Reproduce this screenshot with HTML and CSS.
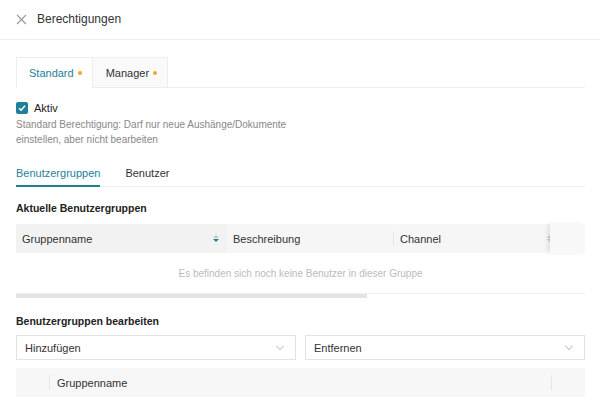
FILE: index.html
```html
<!DOCTYPE html>
<html lang="de">
<head>
  <meta charset="UTF-8">
  <title>Berechtigungen</title>
  <link rel="stylesheet" href="styles.css">
</head>
<body>

  <!-- Kopfzeile -->
  <header class="topbar">
    <button class="close-btn" aria-label="Schließen">
      <svg width="11" height="11" viewBox="0 0 11 11"><path d="M1 1L10 10M10 1L1 10" stroke="#9a9a9a" stroke-width="1.2" fill="none"/></svg>
    </button>
    <span class="topbar-title">Berechtigungen</span>
  </header>

  <main class="content">
    <div class="role-tabs">
      <div class="role-tab active">Standard<span class="dot"></span></div>
      <div class="role-tab">Manager<span class="dot"></span></div>
    </div>

    <label class="check-row">
      <span class="checkbox">
        <svg width="8" height="8" viewBox="0 0 8 8"><path d="M1 4.2L3.1 6.2L7 1.8" stroke="#fff" stroke-width="1.5" fill="none"/></svg>
      </span>
      Aktiv
    </label>
    <p class="description">Standard Berechtigung: Darf nur neue Aushänge/Dokumente<br>einstellen, aber nicht bearbeiten</p>

    <div class="sub-tabs">
      <div class="sub-tab active">Benutzergruppen</div>
      <div class="sub-tab">Benutzer</div>
    </div>

    <h4 class="section-title">Aktuelle Benutzergruppen</h4>
    <div class="table">
      <div class="table-head">
        <div class="th th-name sorted">
          Gruppenname
          <span class="sorter"><i class="up"></i><i class="down"></i></span>
        </div>
        <div class="th th-desc">Beschreibung</div>
        <div class="th th-channel">Channel<span class="sorter grey"><i class="up"></i><i class="down"></i></span></div>
        <div class="th th-fixed"></div>
      </div>
      <div class="table-empty">Es befinden sich noch keine Benutzer in dieser Gruppe</div>
      <div class="scroll-track"><div class="scroll-thumb"></div></div>
    </div>

    <h4 class="section-title second">Benutzergruppen bearbeiten</h4>
    <div class="select-row">
      <div class="select">Hinzufügen<span class="chevron"></span></div>
      <div class="select">Entfernen<span class="chevron"></span></div>
    </div>

    <div class="table-head small">
      <div class="th th-check"></div>
      <div class="th th-group">Gruppenname</div>
      <div class="th th-end"></div>
    </div>
  </main>

</body>
</html>
```

FILE: styles.css
```css
body {
  margin: 0;
  font-family: "Liberation Sans", Arial, sans-serif;
  font-size: 11px;
  color: #333;
  background: #fff;
}

.topbar {
  display: flex;
  align-items: center;
  height: 38px;
  padding-bottom: 1px;
  border-bottom: 1px solid #eee;
  padding-left: 15px;
}

.close-btn {
  border: none;
  background: none;
  padding: 0;
  width: 12px;
  height: 12px;
  display: flex;
  align-items: center;
  justify-content: center;
  margin-right: 10px;
  cursor: pointer;
}

.topbar-title {
  font-size: 12px;
  color: #333;
}

.content {
  padding: 0 15px 0 16px;
}

.role-tabs {
  display: flex;
  margin-top: 17px;
  border-bottom: 1px solid #eee;
}

.role-tab {
  height: 29px;
  display: flex;
  align-items: center;
  padding: 0 10px 0 13px;
  background: #fafafa;
  border: 1px solid #eee;
  border-bottom: none;
  margin-bottom: -1px;
  color: #333;
}

.role-tab + .role-tab {
  border-left: none;
}

.role-tab.active {
  background: #fff;
  color: #1e7f99;
  height: 30px;
  padding-left: 12px;
}

.dot {
  width: 4px;
  height: 4px;
  border-radius: 50%;
  background: #f5a623;
  margin-left: 4px;
}

.check-row {
  display: flex;
  align-items: center;
  margin-top: 13px;
  height: 14px;
  color: #222;
}

.checkbox {
  width: 12px;
  height: 12px;
  border-radius: 2px;
  background: #1e7f99;
  display: flex;
  align-items: center;
  justify-content: center;
  margin-right: 6px;
}

.description {
  margin: 2px 0 0;
  font-size: 10px;
  line-height: 15px;
  color: #888;
}

.sub-tabs {
  display: flex;
  gap: 25px;
  margin-top: 13px;
  border-bottom: 1px solid #eee;
}

.sub-tab {
  height: 25px;
  line-height: 26px;
  border-bottom: 2px solid transparent;
  margin-bottom: -1px;
  color: #333;
}

.sub-tab.active {
  color: #1e7f99;
  border-bottom-color: #1e7f99;
}

.section-title {
  margin: 14px 0 0;
  font-size: 10.5px;
  line-height: 14px;
  font-weight: bold;
  color: #222;
}

.section-title.second {
  margin-top: 16px;
}

.table {
  margin-top: 9px;
}

.table-head {
  display: flex;
  height: 29px;
  background: #f6f6f6;
}

.th {
  display: flex;
  align-items: center;
  padding-left: 6px;
  position: relative;
  box-sizing: border-box;
}

.th-name {
  width: 211px;
}

.th-name.sorted {
  background: #f2f2f2;
}

.th-desc {
  width: 167px;
}

.th-desc::after,
.th-check::after,
.th-group::after {
  content: "";
  position: absolute;
  right: 0;
  top: 7px;
  bottom: 7px;
  width: 1px;
  background: #e6e6e6;
}

.th-channel {
  width: 156px;
}

.th-fixed {
  flex: 1;
  background: #f8f8f8;
  box-shadow: -3px 0 4px rgba(0, 0, 0, 0.08);
}

.sorter {
  position: absolute;
  right: 8px;
  top: 11px;
  display: flex;
  flex-direction: column;
  gap: 1px;
}

.sorter.grey {
  right: -3px;
}

.sorter i {
  width: 0;
  height: 0;
  border-left: 3px solid transparent;
  border-right: 3px solid transparent;
}

.sorter .up {
  border-bottom: 3px solid #c4c4c4;
}

.sorter .down {
  border-top: 3px solid #1e7f99;
}

.sorter.grey .down {
  border-top-color: #c4c4c4;
}

.table-empty {
  height: 40px;
  display: flex;
  align-items: center;
  justify-content: center;
  border-bottom: 1px solid #eee;
  color: #bbb;
  font-size: 10px;
}

.scroll-track {
  height: 4px;
}

.scroll-thumb {
  width: 351px;
  height: 4px;
  background: #e3e3e3;
}

.select-row {
  display: flex;
  gap: 9px;
  margin-top: 7px;
}

.select {
  flex: 1;
  height: 25px;
  box-sizing: border-box;
  border: 1px solid #e2e2e2;
  display: flex;
  align-items: center;
  justify-content: space-between;
  padding: 0 12px 0 8px;
  color: #333;
}

.chevron {
  width: 5px;
  height: 5px;
  border-right: 1px solid #c8c8c8;
  border-bottom: 1px solid #c8c8c8;
  transform: rotate(45deg);
  margin-top: -3px;
}

.table-head.small {
  margin-top: 8px;
  background: #f7f7f7;
}

.th-check {
  width: 34px;
}

.th-group {
  width: 502px;
  padding-left: 7px;
}

.th-end {
  flex: 1;
}
```
